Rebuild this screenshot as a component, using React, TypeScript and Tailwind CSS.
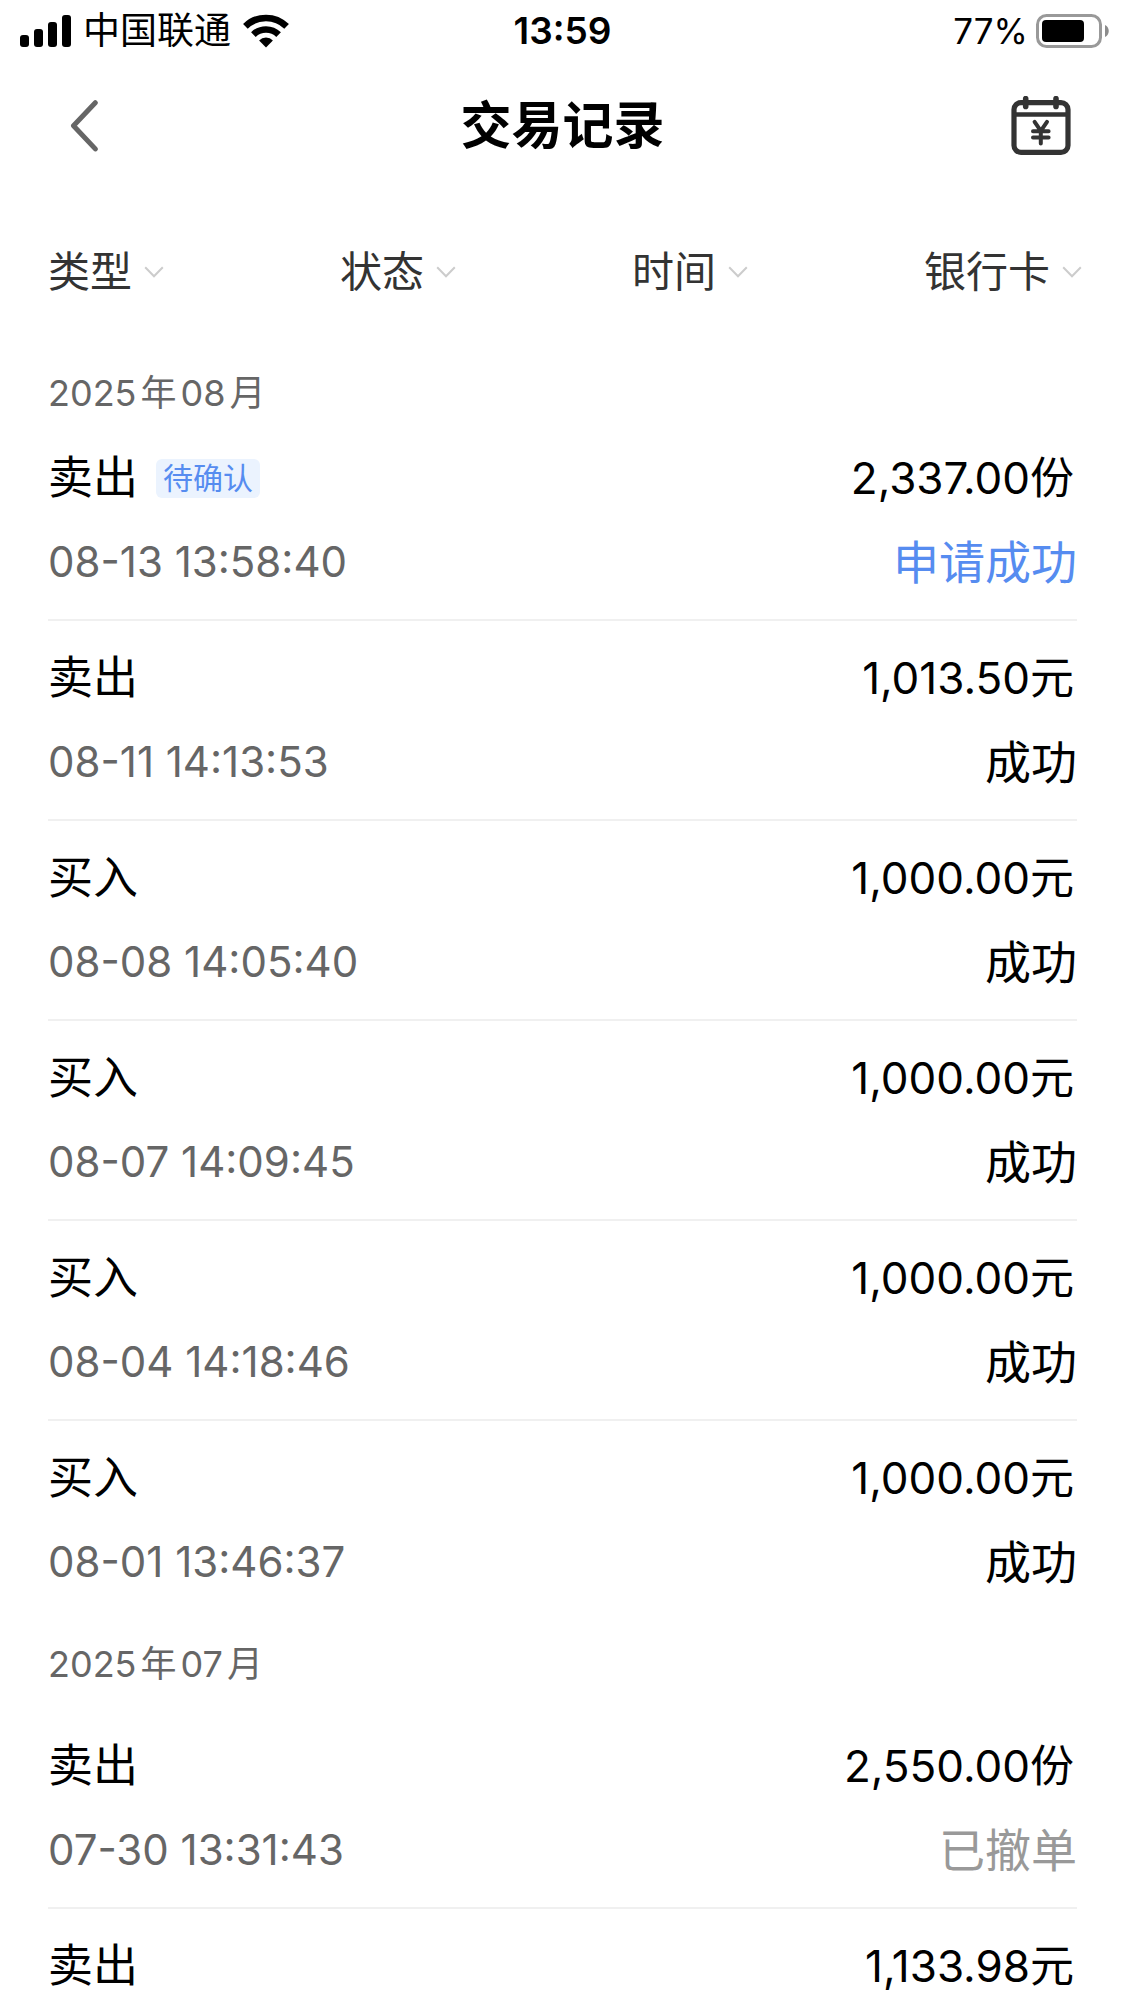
import clsx from "clsx"

type Status = "pending" | "done" | "cancelled"

interface Trade {
  type: string
  tag?: string
  amount: string
  time?: string
  status?: Status
}

interface MonthGroup {
  year: string
  month: string
  trades: Trade[]
}

const statusLabel: Record<Status, string> = {
  pending: "申请成功",
  done: "成功",
  cancelled: "已撤单",
}

const filters = ["类型", "状态", "时间", "银行卡"]

const groups: MonthGroup[] = [
  {
    year: "2025",
    month: "08",
    trades: [
      { type: "卖出", tag: "待确认", amount: "2,337.00份", time: "08-13 13:58:40", status: "pending" },
      { type: "卖出", amount: "1,013.50元", time: "08-11 14:13:53", status: "done" },
      { type: "买入", amount: "1,000.00元", time: "08-08 14:05:40", status: "done" },
      { type: "买入", amount: "1,000.00元", time: "08-07 14:09:45", status: "done" },
      { type: "买入", amount: "1,000.00元", time: "08-04 14:18:46", status: "done" },
      { type: "买入", amount: "1,000.00元", time: "08-01 13:46:37", status: "done" },
    ],
  },
  {
    year: "2025",
    month: "07",
    trades: [
      { type: "卖出", amount: "2,550.00份", time: "07-30 13:31:43", status: "cancelled" },
      { type: "卖出", amount: "1,133.98元" },
    ],
  },
]

const SignalIcon = () => (
  <svg className="h-8 w-[51px]" viewBox="0 0 51 32" fill="currentColor" aria-hidden="true">
    <rect x="0" y="20" width="9" height="12" rx="3" />
    <rect x="14" y="14" width="9" height="18" rx="3" />
    <rect x="28" y="7" width="9" height="25" rx="3" />
    <rect x="42" y="0" width="9" height="32" rx="3" />
  </svg>
)

const WifiIcon = () => (
  <svg className="h-[34px] w-[46px]" viewBox="0 0 46 34" fill="none" aria-hidden="true">
    <path d="M2.4 12.4a29.3 29.3 0 0 1 41.2 0" stroke="currentColor" strokeWidth="6.6" />
    <path d="M10.4 20.6a18 18 0 0 1 25.2 0" stroke="currentColor" strokeWidth="6.6" />
    <path d="M23 33.4l-6.9-7a9.9 9.9 0 0 1 13.8 0z" fill="currentColor" />
  </svg>
)

const BatteryIcon = () => (
  <svg className="h-[34px] w-[73px]" viewBox="0 0 73 34" aria-hidden="true">
    <rect x="1.5" y="1.5" width="63" height="31" rx="9" fill="none" stroke="#999" strokeWidth="3" />
    <rect x="6" y="6" width="42" height="22" rx="4" fill="#000" />
    <path d="M69 11c5 2 5 10 0 12z" fill="#8c8c8c" />
  </svg>
)

const CalendarIcon = () => (
  <svg className="h-[60px] w-[60px]" viewBox="0 0 60 60" fill="none" stroke="#333" aria-hidden="true">
    <rect x="3" y="6.6" width="54" height="49.8" rx="7" strokeWidth="5.2" />
    <path d="M3 18.5h54" strokeWidth="4.6" />
    <path d="M14.7 2.6v7.8M45 2.6v7.8" strokeWidth="5.6" strokeLinecap="round" />
    <path
      d="M23.6 25.8l6.2 9 6.2-9M29.8 34.8v12.8M22 35.3h15.6M22 41.5h15.6"
      strokeWidth="4"
      strokeLinecap="round"
      strokeLinejoin="round"
    />
  </svg>
)

const StatusBar = () => (
  <div className="grid h-[62px] grid-cols-3 items-center px-5 text-[37px] leading-[48px] text-black">
    <div className="flex items-center">
      <SignalIcon />
      <span className="mr-3 ml-3 whitespace-nowrap">中国联通</span>
      <WifiIcon />
    </div>
    <span className="text-center font-semibold">13:59</span>
    <div className="-mr-1 flex items-center justify-end gap-2">
      <span className="text-[35px]">77%</span>
      <BatteryIcon />
    </div>
  </div>
)

const Header = () => (
  <header className="flex h-32 items-center justify-between px-[54px]">
    <button type="button" aria-label="返回" className="flex h-[60px] w-[60px] items-center justify-center">
      <svg className="h-[52px] w-7" viewBox="0 0 28 52" fill="none" aria-hidden="true">
        <path
          d="M25.3 2.7L3.5 25.8l21.8 23.1"
          stroke="#666"
          strokeWidth="5"
          strokeLinecap="round"
          strokeLinejoin="round"
        />
      </svg>
    </button>
    <h1 className="text-[51px] leading-[60px] font-bold text-black">交易记录</h1>
    <button type="button" aria-label="交易日历">
      <CalendarIcon />
    </button>
  </header>
)

const FilterBar = () => (
  <div className="flex h-[163px] items-center justify-between pr-[43px] pl-12">
    {filters.map((name) => (
      <label key={name} className="flex items-center gap-3">
        <select
          aria-label={name}
          className="field-sizing-content appearance-none bg-transparent text-[42px] leading-[60px] text-[#333]"
        >
          <option>{name}</option>
        </select>
        <svg className="h-3 w-5" viewBox="0 0 20 12" fill="none" aria-hidden="true">
          <path d="M1.2 1.2L10 10.2l8.8-9" stroke="#ccc" strokeWidth="2" />
        </svg>
      </label>
    ))}
  </div>
)

const TradeRow = ({ trade }: { trade: Trade }) => (
  <li className="flex flex-col gap-6 border-b-2 border-[#f0f0f0] py-[27px] text-[45px] leading-[60px] text-black last:border-b-0">
    <div className="flex items-center justify-between">
      <div className="flex items-center gap-[18px]">
        <span>{trade.type}</span>
        {trade.tag && (
          <span className="rounded-md bg-[#ebf3fe] px-[7px] text-[30px] leading-[39px] text-[#568cf0]">
            {trade.tag}
          </span>
        )}
      </div>
      <span className="pr-[3px] text-[44px]">{trade.amount}</span>
    </div>
    {trade.status && (
      <div className="flex items-center justify-between">
        <time className="text-[42px] text-[#666]">{trade.time}</time>
        <span
          className={clsx(
            "text-[46px]",
            trade.status === "pending" && "text-[#568cf0]",
            trade.status === "cancelled" && "text-[#999]"
          )}
        >
          {statusLabel[trade.status]}
        </span>
      </div>
    )}
  </li>
)

const App = () => {
  return (
    <div
      lang="zh-CN"
      className="flex h-screen flex-col bg-white font-[Inter,'Noto_Sans_CJK_SC',sans-serif]"
    >
      <StatusBar />
      <Header />
      <FilterBar />
      <main className="min-h-0 flex-1 overflow-y-auto px-12 [scrollbar-width:none]">
        {groups.map((group, index) => (
          <section key={group.month}>
            <h2
              className={clsx(
                "flex gap-1 text-[36px] leading-[48px] text-[#666]",
                index === 0 ? "pt-4 pb-1" : "py-[21px]"
              )}
            >
              <span>{group.year}</span>
              <span>年</span>
              <span>{group.month}</span>
              <span>月</span>
            </h2>
            <ul>
              {group.trades.map((trade, i) => (
                <TradeRow key={i} trade={trade} />
              ))}
            </ul>
          </section>
        ))}
      </main>
    </div>
  )
}

export default App
